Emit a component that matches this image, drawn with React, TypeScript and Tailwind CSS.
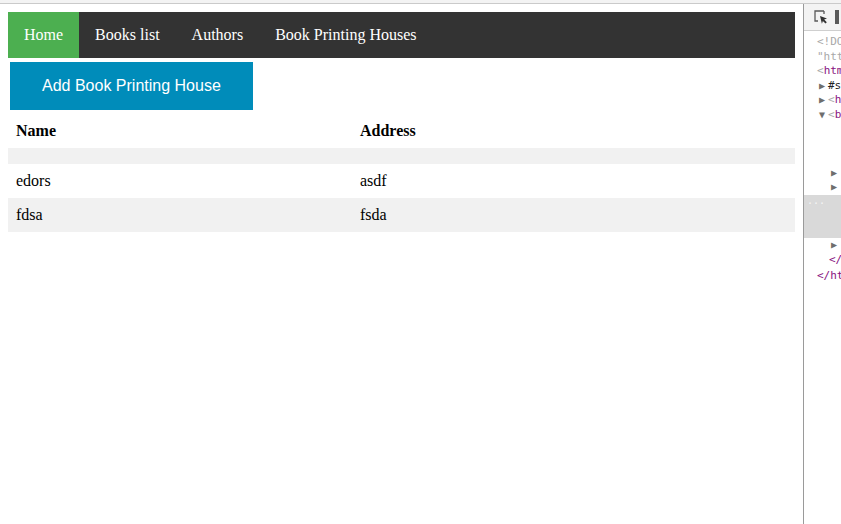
import React from "react";

const navItems = ["Home", "Books list", "Authors", "Book Printing Houses"];

const rows = [
  { name: "", address: "" },
  { name: "edors", address: "asdf" },
  { name: "fdsa", address: "fsda" },
];

const InspectIcon = () => (
  <svg width="16" height="16" viewBox="0 0 16 16" fill="none">
    <path d="M11 2H2v9" stroke="#5a5a5a" strokeWidth="1.3" />
    <path d="M2 11v1h3M11 2v3" stroke="#5a5a5a" strokeWidth="1.3" />
    <path d="M7 7l7 2.6-2.8 1 2.6 2.6-1.3 1.3-2.6-2.6-1 2.8z" fill="#333" />
  </svg>
);

const Arrow = ({ down }: { down?: boolean }) => (
  <span className="inline-block w-[9px] text-[#6e6e6e] text-[10px]">{down ? "▼" : "▶"}</span>
);

const DevTools = () => {
  const lines: React.ReactNode[] = [
    <span className="text-[#a8a8a8]">&lt;!DOC</span>,
    <span className="text-[#a8a8a8]">"http</span>,
    <span>
      <span className="text-[#a8a8a8]">&lt;</span>
      <span className="text-[#881280]">htm</span>
    </span>,
    <span className="pl-[2px]">
      <Arrow />
      <span className="text-[#222]">#s</span>
    </span>,
    <span className="pl-[2px]">
      <Arrow />
      <span className="text-[#a8a8a8]">&lt;</span>
      <span className="text-[#881280]">h</span>
    </span>,
    <span className="pl-[2px]">
      <Arrow down />
      <span className="text-[#a8a8a8]">&lt;</span>
      <span className="text-[#881280]">b</span>
    </span>,
    null,
    null,
    null,
    <span className="pl-[14px]">
      <Arrow />
    </span>,
    <span className="pl-[14px]">
      <Arrow />
    </span>,
  ];

  return (
    <div className="w-[38px] shrink-0 border-l border-[#9a9a9a] bg-white flex flex-col overflow-hidden">
      <div className="h-[27px] bg-[#f3f3f3] border-b border-[#cfcfcf] flex items-center gap-[6px] pl-[9px] shrink-0">
        <InspectIcon />
        <div className="w-[4px] h-[14px] bg-[#5a5a5a]" />
      </div>
      <div className="pt-[4px] font-['DejaVu_Sans_Mono',monospace] text-[11px] whitespace-nowrap">
        {lines.map((l, i) => (
          <div key={i} className="h-[14.5px] leading-[14.5px] pl-[13px]">
            {l}
          </div>
        ))}
        <div className="h-[43px] bg-[#d9d9d9] pl-[3px] text-[#f5f5f5] leading-[12px] text-[10px]">
          ...
        </div>
        <div className="h-[14.5px] leading-[14.5px] pl-[27px]">
          <Arrow />
        </div>
        <div className="h-[16px] leading-[16px] pl-[25px] text-[#881280]">
          &lt;/
        </div>
        <div className="h-[15px] leading-[15px] pl-[13px]">
          <span className="text-[#881280]">&lt;/ht</span>
        </div>
      </div>
    </div>
  );
};

export default function App() {
  return (
    <div className="w-[841px] h-[524px] bg-white flex flex-col overflow-hidden">
      <div className="h-[4px] bg-[#f3f3f3] border-b border-[#cacaca] shrink-0" />
      <div className="flex flex-1 min-h-0">
        <div className="w-[803px] shrink-0 p-[8px] font-['Liberation_Serif',serif] text-[16px] text-black">
          <ul className="flex bg-[#333333] text-white">
            {navItems.map((item, i) => (
              <li key={item}>
                <a
                  href="#"
                  className={`block px-[16px] py-[14px] leading-[18px] ${i === 0 ? "bg-[#4CAF50]" : ""}`}
                >
                  {item}
                </a>
              </li>
            ))}
          </ul>
          <button className="mx-[2px] my-[4px] bg-[#008CBA] text-white px-[32px] py-[15px] leading-[18px] font-['Liberation_Sans',sans-serif] text-[16px]">
            Add Book Printing House
          </button>
          <table className="w-full border-collapse">
            <colgroup>
              <col className="w-[344px]" />
              <col />
            </colgroup>
            <thead>
              <tr>
                <th className="text-left font-bold px-[8px] py-[8px] leading-[18px]">Name</th>
                <th className="text-left font-bold px-[8px] py-[8px] leading-[18px]">Address</th>
              </tr>
            </thead>
            <tbody>
              {rows.map((r, i) => (
                <tr key={i} className={i % 2 === 0 ? "bg-[#f1f1f1]" : ""}>
                  <td className={`px-[8px] leading-[18px] ${r.name ? "py-[8px]" : "py-0 h-[16px]"}`}>
                    {r.name}
                  </td>
                  <td className={`px-[8px] leading-[18px] ${r.name ? "py-[8px]" : "py-0 h-[16px]"}`}>
                    {r.address}
                  </td>
                </tr>
              ))}
            </tbody>
          </table>
        </div>
        <DevTools />
      </div>
    </div>
  );
}
